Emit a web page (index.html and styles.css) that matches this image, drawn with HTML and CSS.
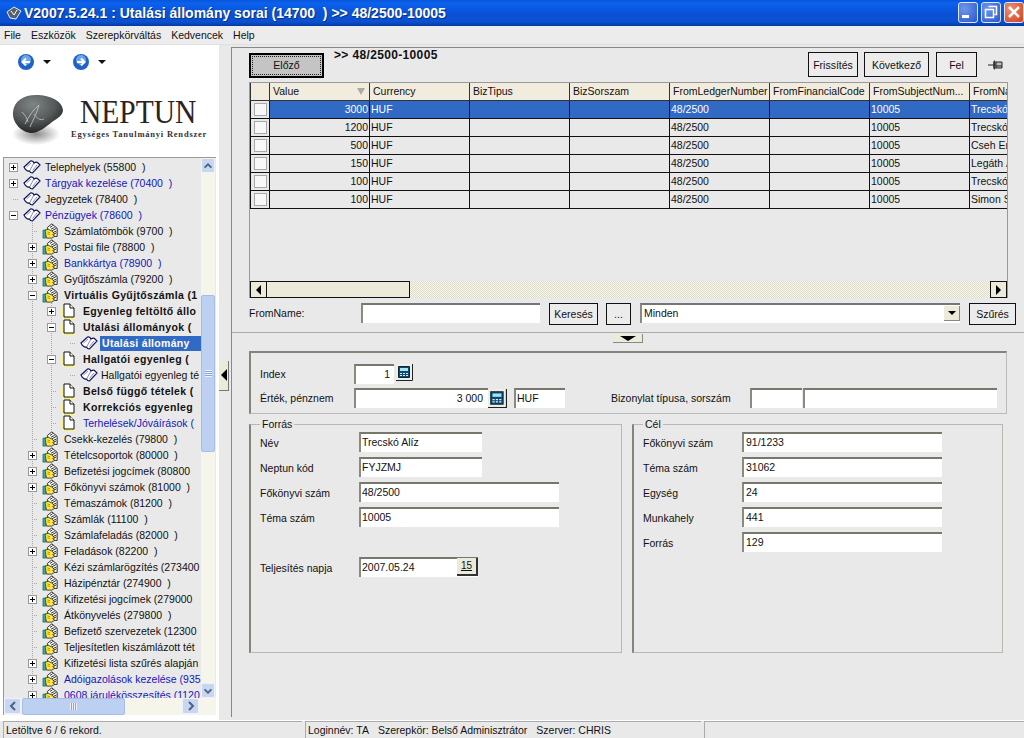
FILE: index.html
```html
<!DOCTYPE html>
<html lang="hu">
<head>
<meta charset="utf-8">
<title>NEPTUN</title>
<link rel="stylesheet" href="styles.css">
</head>
<body>
<svg class="defs" width="0" height="0" aria-hidden="true">
  <defs>
    <symbol id="book" viewBox="0 0 18 14">
      <path d="M1 7 7.500 1c2-.5 3 .5 3.500 2 1.500-1.200 3-1.200 4 0L17 5l-7.500 8c-1.500 0-2.500-.5-3-2-2 .5-4-1-5.500-4Z" fill="#fff" stroke="#14145a" stroke-width="1.200"/>
      <path d="M11 3 6.500 11M3.500 7l4.500-4M9.500 10.500 14 5" fill="none" stroke="#6070b0" stroke-width=".8"/>
    </symbol>
    <symbol id="folder" viewBox="0 0 17 18">
      <path d="M5 5 10 1l6 5v9H8Z" fill="#fff" stroke="#111"/>
      <path d="M8 5l3-2M9 7l4-2M10 9l5-3M11 11l4-2M12 13l3-2" stroke="#111"/>
      <path d="M2 8l4-1 4 2 3 3-2 1 2 2-3 2H4Z" fill="#ffe83c" stroke="#222" stroke-width=".9"/>
      <path d="M0 8h3v9H0Z" fill="#38a8a0" stroke="#145" stroke-width=".6"/>
      <path d="M5 10l3 1M5 12l3 1" stroke="#806000" stroke-width=".7"/>
    </symbol>
    <symbol id="page" viewBox="0 0 16 16">
      <path d="M3 14h12v2H3Z" fill="#fff27a"/><path d="M0 4h3v10H0Z" fill="#fff27a"/>
      <path d="M3 1h6l4 4v9H3Z" fill="#fff" stroke="#111"/>
      <path d="M9 1v4h4" fill="#fff" stroke="#111"/>
    </symbol>
    <symbol id="calc" viewBox="0 0 17 17">
      <path d="M0 0h17v17H0Z" fill="#f2efe0"/>
      <path d="M16.500 0v16.500H0" fill="none" stroke="#222"/>
      <path d="M2.500 2.500h11v11h-11Z" fill="#0a4a78" stroke="#06283f"/>
      <path d="M4 4h8v3H4Z" fill="#a8e4ee"/>
      <path d="M4 9h2v1H4ZM7 9h2v1H7ZM10 9h2v1h-2ZM4 11h2v1H4ZM7 11h2v1H7ZM10 11h2v1h-2Z" fill="#d8f0f4"/>
    </symbol>
  </defs>
</svg>

<header class="titlebar">
  <svg class="app-icon" width="16" height="14" viewBox="0 0 16 14"><path d="M1 6 8 1l7 4-5 8-6-1Z" fill="#55606a" stroke="#e8eef4"/><path d="M5 5l3 4 3-5" fill="none" stroke="#fff"/></svg>
  <span class="title-text">V2007.5.24.1 : Utalási állomány sorai (14700&nbsp; ) &gt;&gt; 48/2500-10005</span>
  <div class="win-controls">
    <span class="win-btn"><svg width="20" height="20" viewBox="0 0 20 20"><path d="M4 13h7v3H4Z" fill="#fff"/></svg></span>
    <span class="win-btn"><svg width="20" height="20" viewBox="0 0 20 20"><path d="M7.500 4.500h8v8h-2M4.500 7.500h8v8h-8Z" fill="none" stroke="#fff" stroke-width="1.500"/></svg></span>
    <span class="win-btn close"><svg width="20" height="20" viewBox="0 0 20 20"><path d="M5 5l10 10M15 5 5 15" stroke="#fff" stroke-width="2.500"/></svg></span>
  </div>
</header>

<nav class="menubar">
  <span>File</span><span>Eszközök</span><span>Szerepkörváltás</span><span>Kedvencek</span><span>Help</span>
</nav>

<div class="content">
  <aside class="sidebar">
    <div class="nav-top">
      <div class="nav-arrows">
        <svg class="nav-circle" width="16" height="16" viewBox="0 0 16 16"><circle cx="8" cy="8" r="8" fill="#1f62c8"/><circle cx="8" cy="6" r="5" fill="#6fa4ea"/><path d="M12 8H5M8 4.500 4.500 8 8 11.500" fill="none" stroke="#fff" stroke-width="2"/></svg>
        <span class="caret"></span>
        <svg class="nav-circle second" width="16" height="16" viewBox="0 0 16 16"><circle cx="8" cy="8" r="8" fill="#1f62c8"/><circle cx="8" cy="6" r="5" fill="#6fa4ea"/><path d="M4 8h7M8 4.500 11.500 8 8 11.500" fill="none" stroke="#fff" stroke-width="2"/></svg>
        <span class="caret"></span>
      </div>
      <div class="logo">
        <svg class="stone" width="56" height="54" viewBox="0 0 56 54">
          <defs>
            <radialGradient id="stoneFill" cx="40%" cy="25%" r="80%"><stop offset="0" stop-color="#7f8485"/><stop offset=".55" stop-color="#55595a"/><stop offset="1" stop-color="#1c1e1f"/></radialGradient>
            <radialGradient id="stoneShadow" cx="50%" cy="50%" r="50%"><stop offset="0" stop-color="#8a8a8a"/><stop offset="1" stop-color="#fff"/></radialGradient>
          </defs>
          <ellipse cx="25" cy="41" rx="24" ry="11" fill="url(#stoneShadow)"/>
          <path d="M2 19C3 7 14 1 28 2c12 1 23 6 24 15 0 5-5 8-11 12-6 5-14 11-20 11C11 40 1 30 2 19Z" fill="url(#stoneFill)"/>
          <path d="M14 31c4-8 8-14 14-19-2 8-6 15-9 22M23 21c3 4 6 7 10 5M11 19c3 3 5 6 6 10" fill="none" stroke="#b8bcbc" stroke-width=".9"/>
        </svg>
        <div class="logo-text">
          <div class="logo-name">NEPTUN</div>
          <div class="logo-sub">Egységes Tanulmányi Rendszer</div>
        </div>
      </div>
    </div>
    <div class="tree-box">
      <div class="tree-body">
        <div class="tree">
          <div class="row l0"><i class="exp"></i><svg class="ic-book"><use href="#book"/></svg><span>Telephelyek (55800&nbsp; )</span></div>
          <div class="row l0"><i class="exp"></i><svg class="ic-book"><use href="#book"/></svg><span class="blue">Tárgyak kezelése (70400&nbsp; )</span></div>
          <div class="row l0"><i class="noexp"></i><svg class="ic-book"><use href="#book"/></svg><span>Jegyzetek (78400&nbsp; )</span></div>
          <div class="row l0"><i class="exp open"></i><svg class="ic-book"><use href="#book"/></svg><span class="blue">Pénzügyek (78600&nbsp; )</span></div>
          <div class="row l1"><i class="noexp"></i><svg class="ic-folder"><use href="#folder"/></svg><span>Számlatömbök (9700&nbsp; )</span></div>
          <div class="row l1"><i class="exp"></i><svg class="ic-folder"><use href="#folder"/></svg><span>Postai file (78800&nbsp; )</span></div>
          <div class="row l1"><i class="exp"></i><svg class="ic-folder"><use href="#folder"/></svg><span class="blue">Bankkártya (78900&nbsp; )</span></div>
          <div class="row l1"><i class="exp"></i><svg class="ic-folder"><use href="#folder"/></svg><span>Gyűjtőszámla (79200&nbsp; )</span></div>
          <div class="row l1"><i class="exp open"></i><svg class="ic-folder"><use href="#folder"/></svg><span class="strong">Virtuális Gyűjtőszámla (1</span></div>
          <div class="row l2"><i class="exp"></i><svg class="ic-page"><use href="#page"/></svg><span class="strong">Egyenleg feltöltő állo</span></div>
          <div class="row l2"><i class="exp open"></i><svg class="ic-page"><use href="#page"/></svg><span class="strong">Utalási állományok (</span></div>
          <div class="row l3 selected-row"><i class="noexp"></i><svg class="ic-book"><use href="#book"/></svg><span class="sel">Utalási állomány</span></div>
          <div class="row l2"><i class="exp open"></i><svg class="ic-page"><use href="#page"/></svg><span class="strong">Hallgatói egyenleg (</span></div>
          <div class="row l3"><i class="noexp"></i><svg class="ic-book"><use href="#book"/></svg><span>Hallgatói egyenleg té</span></div>
          <div class="row l2"><i class="noexp"></i><svg class="ic-page"><use href="#page"/></svg><span class="strong">Belső függő tételek (</span></div>
          <div class="row l2"><i class="noexp"></i><svg class="ic-page"><use href="#page"/></svg><span class="strong">Korrekciós egyenleg</span></div>
          <div class="row l2"><i class="noexp"></i><svg class="ic-page"><use href="#page"/></svg><span class="blue">Terhelések/Jóváírások (</span></div>
          <div class="row l1"><i class="noexp"></i><svg class="ic-folder"><use href="#folder"/></svg><span>Csekk-kezelés (79800&nbsp; )</span></div>
          <div class="row l1"><i class="exp"></i><svg class="ic-folder"><use href="#folder"/></svg><span>Tételcsoportok (80000&nbsp; )</span></div>
          <div class="row l1"><i class="exp"></i><svg class="ic-folder"><use href="#folder"/></svg><span>Befizetési jogcímek (80800</span></div>
          <div class="row l1"><i class="exp"></i><svg class="ic-folder"><use href="#folder"/></svg><span>Főkönyvi számok (81000&nbsp; )</span></div>
          <div class="row l1"><i class="noexp"></i><svg class="ic-folder"><use href="#folder"/></svg><span>Témaszámok (81200&nbsp; )</span></div>
          <div class="row l1"><i class="noexp"></i><svg class="ic-folder"><use href="#folder"/></svg><span>Számlák (11100&nbsp; )</span></div>
          <div class="row l1"><i class="noexp"></i><svg class="ic-folder"><use href="#folder"/></svg><span>Számlafeladás (82000&nbsp; )</span></div>
          <div class="row l1"><i class="exp"></i><svg class="ic-folder"><use href="#folder"/></svg><span>Feladások (82200&nbsp; )</span></div>
          <div class="row l1"><i class="noexp"></i><svg class="ic-folder"><use href="#folder"/></svg><span>Kézi számlarögzítés (273400</span></div>
          <div class="row l1"><i class="noexp"></i><svg class="ic-folder"><use href="#folder"/></svg><span>Házipénztár (274900&nbsp; )</span></div>
          <div class="row l1"><i class="exp"></i><svg class="ic-folder"><use href="#folder"/></svg><span>Kifizetési jogcímek (279000</span></div>
          <div class="row l1"><i class="noexp"></i><svg class="ic-folder"><use href="#folder"/></svg><span>Átkönyvelés (279800&nbsp; )</span></div>
          <div class="row l1"><i class="noexp"></i><svg class="ic-folder"><use href="#folder"/></svg><span>Befizető szervezetek (12300</span></div>
          <div class="row l1"><i class="noexp"></i><svg class="ic-folder"><use href="#folder"/></svg><span>Teljesítetlen kiszámlázott tét</span></div>
          <div class="row l1"><i class="exp"></i><svg class="ic-folder"><use href="#folder"/></svg><span>Kifizetési lista szűrés alapján</span></div>
          <div class="row l1"><i class="exp"></i><svg class="ic-folder"><use href="#folder"/></svg><span class="blue">Adóigazolások kezelése (935</span></div>
          <div class="row l1"><i class="exp"></i><svg class="ic-folder"><use href="#folder"/></svg><span class="blue">0608 járulékösszesítés (1120</span></div>
        </div>
        <div class="vscroll">
          <span class="sb-btn"><svg width="14" height="14" viewBox="0 0 14 14"><path d="M3 9l4-4 4 4" fill="none" stroke="#4d6185" stroke-width="2"/></svg></span>
          <div class="vtrack"><div class="vthumb"><span class="grip-h"></span></div></div>
          <span class="sb-btn"><svg width="14" height="14" viewBox="0 0 14 14"><path d="M3 5l4 4 4-4" fill="none" stroke="#4d6185" stroke-width="2"/></svg></span>
        </div>
      </div>
      <div class="hscroll">
        <span class="sb-btn small"><svg width="14" height="14" viewBox="0 0 14 14"><path d="M9 3 5 7l4 4" fill="none" stroke="#4d6185" stroke-width="2"/></svg></span>
        <div class="hthumb"><span class="grip-v"></span></div>
        <span class="sb-btn small end"><svg width="14" height="14" viewBox="0 0 14 14"><path d="M5 3l4 4-4 4" fill="none" stroke="#4d6185" stroke-width="2"/></svg></span>
      </div>
    </div>
  </aside>

  <div class="splitter"><span class="split-handle"><span class="tri-left"></span></span></div>

  <main class="main">
    <section class="top-pane">
      <div class="toolbar">
        <button class="btn btn-default"><span>Előző</span></button>
        <strong class="crumb">&gt;&gt; 48/2500-10005</strong>
        <div class="tool-right">
          <button class="btn w-frissites">Frissítés</button>
          <button class="btn w-kovetkezo">Következő</button>
          <button class="btn w-fel">Fel</button>
          <svg class="pin" width="16" height="12" viewBox="0 0 16 12"><path d="M0 6h6M6 3v6M6 2h1v8H6ZM8 3h6v6H8ZM8 7h6" fill="#bbb" stroke="#222"/></svg>
        </div>
      </div>

      <div class="grid">
        <div class="grid-view">
          <table class="data">
            <colgroup><col class="c0"><col class="c1"><col class="c1"><col class="c1"><col class="c1"><col class="c1"><col class="c1"><col class="c1"><col class="c1"></colgroup>
            <thead>
              <tr><th></th><th class="sorted">Value<i class="sort"></i></th><th>Currency</th><th>BizTipus</th><th>BizSorszam</th><th>FromLedgerNumber</th><th>FromFinancialCode</th><th>FromSubjectNum...</th><th>FromName</th></tr>
            </thead>
            <tbody>
              <tr class="sel-row"><td><i class="check"></i></td><td class="num">3000</td><td>HUF</td><td></td><td></td><td>48/2500</td><td></td><td>10005</td><td>Trecskó Alíz</td></tr>
              <tr><td><i class="check"></i></td><td class="num">1200</td><td>HUF</td><td></td><td></td><td>48/2500</td><td></td><td>10005</td><td>Trecskó Alíz</td></tr>
              <tr><td><i class="check"></i></td><td class="num">500</td><td>HUF</td><td></td><td></td><td>48/2500</td><td></td><td>10005</td><td>Cseh Emma</td></tr>
              <tr><td><i class="check"></i></td><td class="num">150</td><td>HUF</td><td></td><td></td><td>48/2500</td><td></td><td>10005</td><td>Legáth Ádám</td></tr>
              <tr><td><i class="check"></i></td><td class="num">100</td><td>HUF</td><td></td><td></td><td>48/2500</td><td></td><td>10005</td><td>Trecskó Alíz</td></tr>
              <tr><td><i class="check"></i></td><td class="num">100</td><td>HUF</td><td></td><td></td><td>48/2500</td><td></td><td>10005</td><td>Simon Sára</td></tr>
            </tbody>
          </table>
        </div>
        <div class="grid-scroll">
          <span class="gs-btn"><i class="tri-l"></i></span>
          <span class="gs-thumb"></span>
          <span class="gs-track"></span>
          <span class="gs-btn"><i class="tri-r"></i></span>
        </div>
      </div>

      <div class="filter">
        <label class="filter-label">FromName:</label>
        <div class="input f-name"></div>
        <button class="btn w-kereses">Keresés</button>
        <button class="btn w-dots">...</button>
        <div class="input f-select">Minden<span class="combo-btn"><i></i></span></div>
        <button class="btn w-szures">Szűrés</button>
      </div>
    </section>

    <section class="bottom-pane">
      <div class="collapse-row"><span class="collapse"><i></i></span></div>
      <div class="head-box">
        <div class="form-row first">
          <label class="lbl">Index</label>
          <div class="input w-index num-val">1</div>
          <svg class="calc"><use href="#calc"/></svg>
        </div>
        <div class="form-row second">
          <label class="lbl">Érték, pénznem</label>
          <div class="input w-ertek num-val">3 000</div>
          <svg class="calc tight"><use href="#calc"/></svg>
          <div class="input w-huf">HUF</div>
          <label class="lbl-biz">Bizonylat típusa, sorszám</label>
          <div class="input w-biz1"></div>
          <div class="input w-biz2"></div>
        </div>
      </div>
      <div class="groups">
        <fieldset class="group g-forras">
          <legend>Forrás</legend>
          <div class="g-row"><label>Név</label><div class="input w-short">Trecskó Alíz</div></div>
          <div class="g-row"><label>Neptun kód</label><div class="input w-short">FYJZMJ</div></div>
          <div class="g-row"><label>Főkönyvi szám</label><div class="input w-long">48/2500</div></div>
          <div class="g-row"><label>Téma szám</label><div class="input w-long">10005</div></div>
          <div class="g-row date"><label>Teljesítés napja</label><div class="input w-date">2007.05.24<span class="date-btn">15</span></div></div>
        </fieldset>
        <fieldset class="group g-cel">
          <legend>Cél</legend>
          <div class="g-row"><label>Főkönyvi szám</label><div class="input w-long">91/1233</div></div>
          <div class="g-row"><label>Téma szám</label><div class="input w-long">31062</div></div>
          <div class="g-row"><label>Egység</label><div class="input w-long">24</div></div>
          <div class="g-row"><label>Munkahely</label><div class="input w-long">441</div></div>
          <div class="g-row"><label>Forrás</label><div class="input w-long">129</div></div>
        </fieldset>
      </div>
    </section>
  </main>
</div>

<footer class="statusbar">
  <div class="st st1">Letöltve 6 / 6 rekord.</div>
  <div class="st st2"><span>Loginnév: TA</span><span>Szerepkör: Belső Adminisztrátor</span><span>Szerver: CHRIS</span></div>
  <div class="st st3"></div>
</footer>
</body>
</html>
```
FILE: styles.css
```css
* { box-sizing: border-box; }
html, body { margin: 0; height: 100%; }
body {
  width: 1024px; height: 738px; overflow: hidden;
  display: flex; flex-direction: column;
  background: #e9e9e9; color: #111;
  font: 10.500px/14px "Liberation Sans", Arial, sans-serif;
}
.defs { display: block; height: 0; }
i { display: block; font-style: normal; }

.titlebar {
  height: 26px; flex: none; display: flex; align-items: center; padding-left: 6px;
  background: linear-gradient(#0a55d8 0, #0a62ee 12%, #0a52d6 50%, #0a50d0 85%, #0438a0 100%);
}
.app-icon { flex: none; }
.title-text { margin-left: 2px; color: #fff; font-size: 14px; font-weight: bold; white-space: pre; text-shadow: 1px 1px 0 #06308a; }
.win-controls { margin-left: auto; display: flex; gap: 3px; align-self: flex-start; padding-top: 2px; }
.win-btn { width: 20px; height: 21px; border: 1px solid #dfe8fa; border-radius: 3px; background: radial-gradient(circle at 30% 30%, #6f96ea, #2a56cc); display: block; }
.win-btn svg { display: block; margin: -1px; }
.win-btn.close { background: radial-gradient(circle at 30% 30%, #ec9072, #d13f1a); }

.menubar { height: 19px; flex: none; display: flex; align-items: center; padding-left: 4px; gap: 10px; background: #ececec; border-bottom: 1px solid #e0e0e0; }

.content { flex: 1; min-height: 0; display: flex; }

.sidebar { width: 219px; flex: none; display: flex; flex-direction: column; background: #fff; }
.nav-top { height: 111px; flex: none; }
.nav-arrows { display: flex; align-items: center; padding: 9px 0 0 18px; height: 25px; }
.nav-circle.second { margin-left: 22px; }
.caret { width: 0; height: 0; margin-left: 9px; border: 4px solid transparent; border-top-color: #111; border-bottom: 0; }
.logo { display: flex; margin-top: 23px; padding-left: 11px; }
.stone { flex: none; }
.logo-text { margin-left: 13px; padding-top: 3px; }
.logo-name { font: 29.500px/30px "Liberation Serif", serif; color: #2a2420; transform: scaleY(1.15); transform-origin: 50% 50%; }
.logo-sub { font: bold 8.500px/10px "Liberation Serif", serif; color: #333; letter-spacing: .78px; white-space: nowrap; margin-top: 3px; margin-left: -9px; }

.tree-box { margin: 1px 0 5px 3px; width: 213px; flex: 1; min-height: 0; display: flex; flex-direction: column; border: 1px solid #9a9a90; border-right: 0; border-bottom: 0; background: #e9e9e9; }
.tree-body { flex: 1; min-height: 0; display: flex; }
.tree { flex: 1; min-width: 0; overflow: hidden; padding-top: 1px; }
.row { height: 16px; display: flex; align-items: center; white-space: nowrap; overflow: hidden; background-repeat: no-repeat; }
.row span { padding: 0 1px; line-height: 15px; }
.l0 { padding-left: 5px; }
.l1 { padding-left: 24px; background-image: repeating-linear-gradient(#aaa 0 1px, transparent 1px 2px); background-size: 1px 100%; background-position: 28px 0; }
.l2 { padding-left: 43px; background-image: repeating-linear-gradient(#aaa 0 1px, transparent 1px 2px), repeating-linear-gradient(#aaa 0 1px, transparent 1px 2px); background-size: 1px 100%, 1px 100%; background-position: 28px 0, 47px 0; }
.l3 { padding-left: 62px; background-image: repeating-linear-gradient(#aaa 0 1px, transparent 1px 2px), repeating-linear-gradient(#aaa 0 1px, transparent 1px 2px); background-size: 1px 100%, 1px 100%; background-position: 28px 0, 47px 0; }
.exp, .noexp { width: 9px; height: 9px; flex: none; position: relative; margin-right: 5px; }
.exp { border: 1px solid #999; background: #fff linear-gradient(#000, #000) center / 5px 1px no-repeat; }
.exp::after { content: ""; position: absolute; left: 3px; top: 1px; width: 1px; height: 5px; background: #000; }
.exp.open::after { display: none; }
.noexp { background: repeating-linear-gradient(90deg, #aaa 0 1px, transparent 1px 2px) 4px 4px / 9px 1px no-repeat; }
.ic-book { width: 18px; height: 14px; flex: none; margin-right: 3px; }
.ic-folder { width: 17px; height: 16px; flex: none; margin-right: 3px; }
.l1 .ic-folder { margin-right: 4px; }
.ic-page { width: 16px; height: 16px; flex: none; margin-right: 5px; }
.blue { color: #1515c0; }
.strong { font-weight: bold; letter-spacing: .35px; }
.row .sel { background: #316ac5; color: #fff; font-weight: bold; padding: 0 2px; flex: 1; letter-spacing: .3px; }
.l3 .ic-book { margin-right: 2px; }

.vscroll { width: 14px; flex: none; margin-right: 1px; display: flex; flex-direction: column; background: #f5f5ec; }
.sb-btn { width: 14px; height: 15px; flex: none; display: flex; align-items: center; justify-content: center; background: #c8d6f2; border: 1px solid #eef2fb; border-radius: 2px; }
.vtrack { flex: 1; min-height: 0; padding-top: 122px; padding-bottom: 231px; }
.vthumb { height: 100%; display: flex; align-items: center; justify-content: center; background: #bcd0f2; border: 1px solid #a8bce6; border-radius: 2px; }
.grip-h { width: 7px; height: 7px; background: repeating-linear-gradient(#eef3fc 0 1px, #8ba4d8 1px 2px); }
.hscroll { height: 17px; flex: none; display: flex; background: #f5f5ec; }
.hthumb { width: 103px; margin-left: 1px; display: flex; align-items: center; justify-content: center; background: #bcd0f2; border: 1px solid #a8bce6; border-radius: 2px; }
.grip-v { width: 7px; height: 7px; background: repeating-linear-gradient(90deg, #eef3fc 0 1px, #8ba4d8 1px 2px); }
.sb-btn.small { width: 17px; height: 16px; }
.sb-btn.end { margin-left: 57px; }

.splitter { width: 12px; flex: none; display: flex; align-items: center; background: #e9e9e9; padding-bottom: 2px; }
.split-handle { width: 10px; height: 30px; margin-top: -12px; display: flex; align-items: center; justify-content: center; background: #ecead8; border-right: 1px solid #777; border-bottom: 1px solid #777; }
.tri-left { width: 0; height: 0; border: 6px solid transparent; border-right-color: #000; border-left: 0; }

.main { flex: 1; min-width: 0; margin-top: 2px; margin-bottom: 3px; display: flex; flex-direction: column; border-top: 1px solid #888; border-left: 1px solid #888; }
.top-pane { height: 285px; flex: none; border-bottom: 1px solid #aaa; }
.toolbar { height: 34px; display: flex; padding: 4px 0 0 17px; align-items: flex-start; }
.btn { display: block; padding: 0; margin: 0; font: inherit; color: #111; background: #ececec; border: 1px solid #111; height: 25px; }
.btn-default { width: 75px; height: 25px; margin-top: 1px; border: 2px solid #000; background: #c4c4c4; padding: 1px; }
.btn-default span { display: block; height: 100%; border: 1px dotted #222; line-height: 17px; }
.crumb { margin-left: 10px; font-size: 12px; line-height: 14px; margin-top: -4px; letter-spacing: .35px; position: relative; }
.tool-right { margin-left: auto; display: flex; gap: 6px; padding-right: 20px; }
.w-frissites { width: 50px; } .w-kovetkezo { width: 65px; } .w-fel { width: 41px; margin-left: 1px; }
.pin { margin: 7px 0 0 5px; }

.grid { margin-left: 17px; width: 759px; height: 216px; display: flex; flex-direction: column; border-left: 1px solid #999; border-right: 1px solid #999; border-top: 1px solid #999; }
.grid-view { flex: 1; min-height: 0; overflow: hidden; }
table.data { border-collapse: collapse; table-layout: fixed; width: 820px; }
.c0 { width: 19px; } .c1 { width: 100px; }
.data th, .data td { height: 18px; padding: 0 1px; border: 1px solid #111; white-space: nowrap; overflow: hidden; font-weight: normal; text-align: left; line-height: 14px; }
.data thead th { height: 17px; border-top: 0; background: #f1ecdd; padding-left: 3px; border-color: #333; position: relative; }
.sort { position: absolute; right: 4px; top: 5px; width: 0; height: 0; border: 4px solid transparent; border-top: 7px solid #aaa; border-bottom: 0; }
.data td.num { text-align: right; }
.sel-row td { background: #316ac5; color: #fff; }
.sel-row td:first-child { background: transparent; }
.check { width: 13px; height: 13px; margin: 0 auto; background: #f8f8f8; border: 1px solid #a8a8a8; }
.grid-scroll { height: 17px; flex: none; display: flex; background: repeating-conic-gradient(#dcdcc8 0 25%, #f6f6ea 0 50%) 0 0 / 2px 2px; }
.gs-btn { width: 17px; flex: none; display: flex; align-items: center; justify-content: center; border: 1px solid #111; background: #ecead8; }
.gs-thumb { width: 143px; border: 1px solid #111; border-left: 0; background: #ecead8; }
.gs-track { flex: 1; }
.tri-l { border: 5px solid transparent; border-right-color: #000; border-left: 0; }
.tri-r { border: 5px solid transparent; border-left-color: #000; border-right: 0; }

.filter { margin-top: 5px; display: flex; align-items: flex-start; padding-left: 17px; height: 25px; }
.filter-label { width: 112px; padding-top: 3px; }
.input { height: 20px; background: #fff; border-top: 2px solid #77776c; border-left: 2px solid #8a8a7e; padding-left: 2px; line-height: 17px; position: relative; }
.btn.w-kereses { width: 49px; margin-left: 9px; height: 22px; }
.btn.w-dots { width: 25px; margin-left: 8px; height: 22px; }
.btn.w-szures { width: 47px; margin-left: 9px; height: 22px; }
.f-name { width: 179px; }
.f-select { width: 320px; margin-left: 9px; padding-left: 2px; }
.combo-btn { position: absolute; right: 0; top: 1px; width: 16px; height: 15px; background: #ecead8; border-right: 1px solid #888; border-bottom: 1px solid #888; display: flex; align-items: center; justify-content: center; }
.combo-btn i { border: 4px solid transparent; border-top: 4px solid #000; border-bottom: 0; }

.bottom-pane { flex: 1; min-height: 0; display: flex; flex-direction: column; }
.collapse-row { height: 18px; flex: none; display: flex; justify-content: center; }
.collapse { margin-top: 1px; width: 30px; height: 9px; display: flex; justify-content: center; align-items: center; background: #ecead8; border-right: 1px solid #888; border-bottom: 1px solid #888; }
.collapse i { border: 8px solid transparent; border-top: 5px solid #000; border-bottom: 0; }
.head-box { margin-left: 17px; width: 758px; height: 63px; flex: none; border: 2px solid #84847a; border-right: 1px solid #bbb; border-bottom: 1px solid #bbb; padding: 11px 0 0 9px; }
.form-row { display: flex; align-items: flex-start; }
.form-row.second { margin-top: 4px; }
.lbl { width: 94px; padding-top: 3px; }
.w-index { width: 40px; height: 20px; margin-right: 2px; }
.num-val { text-align: right; padding-right: 4px; padding-left: 0; }
.calc { width: 17px; height: 17px; flex: none; }
.w-ertek { width: 134px; padding-right: 5px; }
.calc.tight { margin: 1px 7px 0 0; width: 19px; height: 19px; }
.w-huf { width: 51px; padding-left: 1px; }
.lbl-biz { width: 139px; margin-left: 46px; padding-top: 3px; white-space: nowrap; }
.w-biz1 { width: 52px; }
.w-biz2 { width: 194px; margin-left: 1px; }

.groups { margin: 4px 0 0 17px; display: flex; gap: 10px; }
.group { margin: 0; padding: 0 0 0 9px; min-width: 0; height: 235px; border: 1px solid #b8b8ae; border-left: 2px solid #84847a; }
.group legend { padding: 0 2px; margin-left: 0; line-height: 12px; }
.g-forras { width: 373px; padding-left: 9px; }
.g-cel { width: 371px; }
.g-row { height: 25px; display: flex; align-items: flex-start; }
.g-row label { width: 99px; padding-top: 4px; }
.g-row:first-of-type { margin-top: 2px; }
.g-forras .input { padding-left: 1px; }
.g-row.date { margin-top: 25px; }
.w-short { width: 123px; }
.w-long { width: 200px; }
.w-date { width: 119px; }
.date-btn { position: absolute; right: 0; top: -1px; width: 21px; height: 18px; background: #ecead8; border-right: 2px solid #333; border-bottom: 2px solid #333; text-align: center; font-size: 10px; line-height: 15px; text-decoration: underline; }

.statusbar { height: 18px; flex: none; display: flex; gap: 3px; padding: 0 0 0 3px; background: #e9e9e9; border-top: 1px solid #fff; }
.st { height: 17px; border-top: 1px solid #aaa; border-left: 1px solid #aaa; padding: 1px 0 0 2px; white-space: nowrap; }
.st1 { width: 299px; }
.st2 { width: 396px; display: flex; gap: 9px; }
.st3 { flex: 1; }
```
